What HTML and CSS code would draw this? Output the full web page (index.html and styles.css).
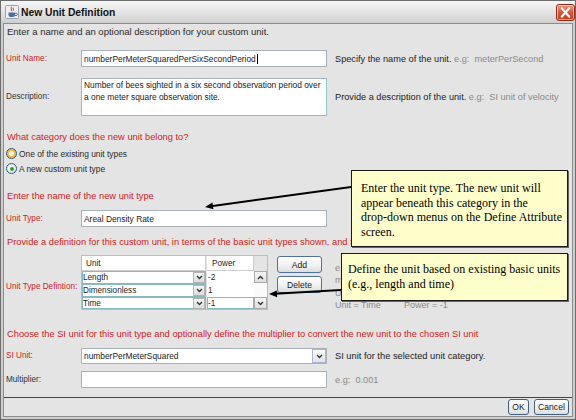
FILE: index.html
```html
<!DOCTYPE html>
<html>
<head>
<meta charset="utf-8">
<title>New Unit Definition</title>
<link rel="stylesheet" href="styles.css">
</head>
<body>
<div class="window">
  <div class="titlebar">
    <svg class="app-icon" viewBox="0 0 14 14">
      <rect x="0.5" y="0.5" width="13" height="13" rx="1" fill="#eef0f4" stroke="#9aa0ac"/>
      <path d="M6.5 1.8c-1.6 1.4 1.2 2.4-0.4 4.4M8.4 2.6c-1 1 0.8 1.6-0.3 3" fill="none" stroke="#e0501a" stroke-width="1.1"/>
      <path d="M3.5 7.5h6.5v2.6a2 2 0 0 1-2 2h-2.5a2 2 0 0 1-2-2z" fill="#4a6fa5"/>
      <path d="M10 8.3h1.2a1.1 1.1 0 0 1 0 2.2H10" fill="none" stroke="#4a6fa5" stroke-width="1"/>
    </svg>
    <span class="title">New Unit Definition</span>
    <div class="close-btn">
      <svg viewBox="0 0 18 16"><path d="M5 3.5l8 9M13 3.5l-8 9" stroke="#fff" stroke-width="2.2" stroke-linecap="round"/></svg>
    </div>
  </div>

  <div class="body">
    <div class="content">
      <p class="intro">Enter a name and an optional description for your custom unit.</p>

      <div class="row row-name">
        <span class="lbl req">Unit Name:</span>
        <div class="field input">numberPerMeterSquaredPerSixSecondPeriod<span class="caret"></span></div>
        <div class="hint"><span class="hint-main">Specify the name of the unit.</span> <span class="eg">e.g:&nbsp; meterPerSecond</span></div>
      </div>

      <div class="row row-desc">
        <span class="lbl">Description:</span>
        <div class="field textarea">Number of bees sighted in a six second observation period over<br>a one meter square observation site.</div>
        <div class="hint"><span class="hint-main">Provide a description of the unit.</span> <span class="eg">e.g:&nbsp; SI unit of velocity</span></div>
      </div>

      <p class="heading h-cat">What category does the new unit belong to?</p>
      <div class="radio-row r-first"><span class="radio hover"></span><span>One of the existing unit types</span></div>
      <div class="radio-row"><span class="radio checked"></span><span>A new custom unit type</span></div>

      <p class="heading h-name">Enter the name of the new unit type</p>
      <div class="row row-type">
        <span class="lbl req">Unit Type:</span>
        <div class="field input">Areal Density Rate</div>
        <div class="hint"></div>
      </div>

      <p class="heading h-def">Provide a definition for this custom unit, in terms of the basic unit types shown, and the power of each unit type (e.g., area)</p>
      <div class="row row-def">
        <span class="lbl req lbl-def">Unit Type Defintion:</span>
        <div class="def-field">
          <div class="tbl">
            <div class="th th-unit">Unit</div>
            <div class="th th-power">Power</div>
            <div class="th-blank"></div>
            <div class="combo-cell"><span>Length</span><span class="dd"><svg viewBox="0 0 8 6"><path d="M1 1.2l3 3 3-3" fill="none" stroke="#333" stroke-width="1.6"/></svg></span></div>
            <div class="pcell">-2</div>
            <div class="vscroll">
              <span class="sbtn"><svg viewBox="0 0 8 6"><path d="M1 4.8l3-3 3 3" fill="none" stroke="#333" stroke-width="1.6"/></svg></span>
              <span class="sbtn"><svg viewBox="0 0 8 6"><path d="M1 1.2l3 3 3-3" fill="none" stroke="#333" stroke-width="1.6"/></svg></span>
            </div>
            <div class="combo-cell"><span>Dimensionless</span><span class="dd"><svg viewBox="0 0 8 6"><path d="M1 1.2l3 3 3-3" fill="none" stroke="#333" stroke-width="1.6"/></svg></span></div>
            <div class="pcell">1</div>
            <div class="combo-cell"><span>Time</span><span class="dd"><svg viewBox="0 0 8 6"><path d="M1 1.2l3 3 3-3" fill="none" stroke="#333" stroke-width="1.6"/></svg></span></div>
            <div class="pcell editing">-1</div>
          </div>
          <div class="tbl-buttons">
            <span class="btn">Add</span>
            <span class="btn">Delete</span>
          </div>
        </div>
        <div class="def-example">
          <div>e.g:&nbsp; Speed</div>
          <div>meterPerSecond</div>
          <div><span class="ex-unit">Unit = Length</span>Power = 1</div>
          <div><span class="ex-unit">Unit = Time</span>Power = -1</div>
        </div>
      </div>

      <p class="heading h-si">Choose the SI unit for this unit type and optionally define the multiplier to convert the new unit to the chosen SI unit</p>
      <div class="row row-si">
        <span class="lbl req">SI Unit:</span>
        <div class="field combo"><span>numberPerMeterSquared</span><span class="combo-btn"><svg viewBox="0 0 8 6"><path d="M1 1.2l3 3 3-3" fill="none" stroke="#333" stroke-width="1.6"/></svg></span></div>
        <div class="hint"><span class="hint-si">SI unit for the selected unit category.</span></div>
      </div>

      <div class="row row-mult">
        <span class="lbl">Multiplier:</span>
        <div class="field input"></div>
        <div class="hint"><span class="eg">e.g:&nbsp; 0.001</span></div>
      </div>
    </div>

    <div class="footer">
      <span class="btn btn-ok">OK</span>
      <span class="btn btn-cancel">Cancel</span>
    </div>
  </div>

  <svg class="arrows" viewBox="0 0 576 420">
    <line x1="351" y1="187" x2="211" y2="206.2" stroke="#000" stroke-width="2"/>
    <polygon points="205,207 213.4,209.3 212.5,202.5" fill="#000"/>
    <line x1="341" y1="290" x2="275" y2="293.7" stroke="#000" stroke-width="2"/>
    <polygon points="269,294 277.2,297.2 276.8,290.4" fill="#000"/>
  </svg>

  <div class="callout callout-type">Enter the unit type. The new unit will<br>appear beneath this category in the<br>drop-down menus on the Define Attribute<br>screen.</div>
  <div class="callout callout-def">Define the unit based on existing basic units<br>(e.g., length and time)</div>
</div>
</body>
</html>
```

FILE: styles.css
```css
* { box-sizing: border-box; margin: 0; padding: 0; }

body {
  margin: 0;
  width: 576px;
  height: 420px;
  overflow: hidden;
  font-family: "Liberation Sans", Arial, sans-serif;
  color: #2a2a2a;
  background: #fff;
}

.window {
  position: relative;
  width: 576px;
  height: 420px;
  border: 1px solid #6c6c6c;
  background: #cfcfcf;
  display: flex;
  flex-direction: column;
}

/* title bar */
.titlebar {
  height: 22px;
  flex: none;
  display: flex;
  align-items: center;
  padding-left: 4px;
  background: linear-gradient(#f6f6f6, #e2e2e2 55%, #cfcfcf);
}
.app-icon { width: 14px; height: 14px; flex: none; }
.title {
  margin-left: 2px;
  font-weight: bold;
  font-size: 10.3px;
  color: #111;
}
.close-btn {
  margin-left: auto;
  width: 19px;
  height: 17px;
  border: 1px solid #8a2a1a;
  border-radius: 3px;
  background: linear-gradient(#ee9a80, #d9553a 50%, #c23a1f);
  box-shadow: inset 0 0 0 1px rgba(255,255,255,0.55);
  display: flex;
  align-items: center;
  justify-content: center;
}
.close-btn svg { width: 17px; height: 15px; }

/* body */
.body {
  flex: 1;
  margin: 0 2px 2px;
  border: 1px solid #8c8c8c;
  background: #e4e4e4;
  display: flex;
  flex-direction: column;
}
.content {
  flex: 1;
  padding: 0 4px 0 3px;
  display: flex;
  flex-direction: column;
}

.intro {
  margin-top: 2px;
  font-size: 9.5px;
  line-height: 12px;
  color: #2a2a2a;
}

.heading {
  font-size: 9.3px;
  line-height: 12px;
  color: #d01c1c;
  white-space: nowrap;
}
.h-cat { margin-top: 15px; }
.h-name { margin-top: 14px; }
.h-def { margin-top: 9px; }
.h-si { margin-top: 18px; }

/* form rows */
.row {
  display: grid;
  grid-template-columns: 74px 246px 1fr;
  align-items: center;
}
.row-name { margin-top: 12px; height: 17px; }
.row-desc { margin-top: 11px; height: 38px; }
.row-type { margin-top: 8px; height: 17px; }
.row-def { margin-top: 7px; height: 55px; align-items: start; }
.row-si { margin-top: 8px; height: 16px; }
.row-mult { margin-top: 7px; height: 17px; }

.lbl {
  margin-left: -1px;
  font-size: 8.2px;
  line-height: 12px;
  color: #333;
  white-space: nowrap;
}
.lbl.req { color: #cc1f1f; }
.lbl-def { margin-top: 26px; }

.field {
  height: 100%;
  background: #fff;
  border: 1px solid #a9b1ba;
  font-size: 8.4px;
  color: #1a1a1a;
  white-space: nowrap;
  overflow: hidden;
}
.input {
  display: flex;
  align-items: center;
  padding-left: 2px;
}
.caret {
  display: inline-block;
  width: 1px;
  height: 10px;
  background: #000;
  margin-left: 1px;
}
.textarea {
  padding: 1px 2px;
  line-height: 11.5px;
  border-right-color: #8ccbd0;
}
.combo {
  display: flex;
  align-items: center;
  padding-left: 2px;
}
.combo span:first-child { flex: 1; }
.combo-btn {
  width: 14px;
  height: 14px;
  border: 1px solid #a7b6d3;
  background: linear-gradient(#fbfbfb, #e2e2e6);
  display: flex;
  align-items: center;
  justify-content: center;
}
.combo-btn svg, .dd svg, .sbtn svg { width: 7px; height: 5px; }

.hint {
  padding-left: 8px;
  font-size: 9.2px;
  line-height: 12px;
  white-space: nowrap;
  color: #222;
}
.hint-main { font-size: 9.2px; }
.hint-si { font-size: 9.3px; }
.eg { color: #8a8a8a; font-size: 9.2px; }

/* radios */
.radio-row {
  height: 15px;
  display: flex;
  align-items: center;
  gap: 2px;
  margin-left: -1px;
  font-size: 8.4px;
  color: #2a2a2a;
}
.r-first { margin-top: 3px; }
.radio {
  position: relative;
  width: 11px;
  height: 11px;
  flex: none;
  border-radius: 50%;
  border: 1px solid #2a5a8c;
  background: radial-gradient(circle at 40% 35%, #ffffff, #dcdcd6);
}
.radio.hover {
  background: radial-gradient(circle, #fbf6e6 0 30%, #f7c04a 45%, #f3b43a 70%, #e9e4d8 80%);
}
.radio.checked::after {
  content: "";
  position: absolute;
  left: 2.5px;
  top: 2.5px;
  width: 4px;
  height: 4px;
  border-radius: 50%;
  background: #27a327;
}

/* definition table */
.def-field {
  display: flex;
  align-items: flex-start;
}
.tbl {
  width: 187px;
  height: 55px;
  display: grid;
  grid-template-columns: 124px 48px 13px;
  grid-template-rows: 15px 13px 13px 12px;
  border: 1px solid #9ccaca;
  background: #e4e4e4;
  font-size: 8.2px;
  color: #1e1e1e;
}
.th {
  background: #fff;
  display: flex;
  align-items: center;
  border-right: 1px solid #cfcfcf;
  border-bottom: 1px solid #cfcfcf;
  white-space: nowrap;
}
.th-unit { padding-left: 4px; }
.th-power { padding-left: 5px; margin-left: 1px; }
.th-blank { background: #e4e4e4; }
.combo-cell {
  display: flex;
  align-items: center;
  background: #fff;
  border: 1px solid #8ab8c2;
  white-space: nowrap;
}
.combo-cell span:first-child { flex: 1; }
.dd {
  width: 12px;
  height: 11px;
  border: 1px solid #b4b4b4;
  background: linear-gradient(#f6f6f6, #dcdcdc);
  display: flex;
  align-items: center;
  justify-content: center;
}
.pcell {
  background: #fff;
  display: flex;
  align-items: center;
  padding-left: 1px;
  margin-left: 1px;
}
.pcell.editing { border: 1px solid #8ab8c2; padding-left: 0; }
.vscroll {
  grid-column: 3;
  grid-row: 2 / 5;
  display: flex;
  flex-direction: column;
  justify-content: space-between;
  background: #fafafa;
}
.sbtn {
  height: 12px;
  border: 1px solid #a9a9a9;
  background: linear-gradient(#f8f8f8, #dedede);
  display: flex;
  align-items: center;
  justify-content: center;
}

.tbl-buttons {
  margin-left: 9px;
  display: flex;
  flex-direction: column;
  gap: 3px;
  margin-top: 1px;
}
.btn {
  display: flex;
  align-items: center;
  justify-content: center;
  height: 17px;
  width: 45px;
  border: 1px solid #50709a;
  border-radius: 3px;
  background: linear-gradient(#ffffff, #f0f0f0 60%, #dcdcdc);
  font-size: 8.6px;
  color: #1a1a1a;
}

.def-example {
  padding-left: 8px;
  margin-top: 7px;
  font-size: 9px;
  line-height: 12.3px;
  color: #8a8a8a;
  white-space: nowrap;
}
.ex-unit { display: inline-block; width: 69px; }

/* footer */
.footer {
  height: 19px;
  flex: none;
  border-top: 1px solid #2e4966;
  display: flex;
  justify-content: flex-end;
  align-items: flex-start;
  gap: 5px;
  padding: 1px 3px 0 0;
}
.footer .btn { height: 16px; border-color: #3f5f87; }
.btn-ok { width: 21px; }
.btn-cancel { width: 35px; }

/* annotation overlay */
.arrows {
  position: absolute;
  left: -1px;
  top: -1px;
  width: 576px;
  height: 420px;
  pointer-events: none;
}
.callout {
  position: absolute;
  background: #ffffcc;
  border: 1px solid #1a1a1a;
  box-shadow: 1px 1px 0 #666;
  font-family: "Liberation Serif", "Times New Roman", serif;
  font-size: 12px;
  color: #000;
  white-space: nowrap;
}
.callout-type {
  left: 350px;
  top: 169px;
  width: 217px;
  height: 77px;
  padding: 10px 0 0 9px;
  line-height: 14.7px;
}
.callout-def {
  left: 340px;
  top: 252px;
  width: 227px;
  height: 48px;
  padding: 8px 0 0 6px;
  line-height: 14.5px;
}
```
